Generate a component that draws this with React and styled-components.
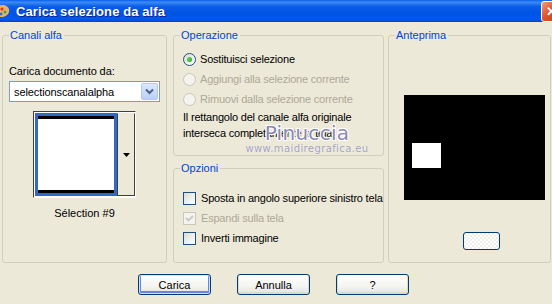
import React from "react";
import styled, { createGlobalStyle } from "styled-components";

const GlobalStyle = createGlobalStyle`
  html, body {
    margin: 0;
    padding: 0;
    background: #ece9d8;
    overflow: hidden;
  }
  body {
    font-family: "Liberation Sans", Arial, sans-serif;
    font-size: 11px;
    color: #000;
  }
`;

const Window = styled.div`
  position: relative;
  width: 552px;
  height: 304px;
  display: flex;
  flex-direction: column;
  background: #ece9d8;
  overflow: hidden;
`;

const TitleBar = styled.div`
  height: 22px;
  flex: none;
  display: flex;
  align-items: center;
  background: linear-gradient(
    #0a5fe8 0%,
    #3b8cf5 10%,
    #0a5ce6 30%,
    #0054e3 60%,
    #0058ee 88%,
    #0046c0 100%
  );
  overflow: hidden;
`;

const TitleIcon = styled.svg`
  width: 12px;
  height: 16px;
  flex: none;
  margin-left: -2px;
`;

const TitleText = styled.div`
  flex: 1;
  margin-left: 6px;
  color: #fff;
  font-family: "Liberation Sans", Arial, sans-serif;
  font-weight: bold;
  font-size: 13px;
  letter-spacing: 0.1px;
  text-shadow: 1px 1px 0 #0a1e8c;
`;

const CloseButton = styled.div`
  flex: none;
  width: 21px;
  height: 21px;
  margin-right: -10px;
  box-sizing: border-box;
  border: 1px solid #fff;
  border-radius: 3px;
  background: linear-gradient(135deg, #f0a078 0%, #e0532b 45%, #c43c13 100%);
  display: flex;
  align-items: center;
  justify-content: center;
  color: #fff;
  font-weight: bold;
  font-size: 13px;
`;

const Body = styled.div`
  display: flex;
  padding: 7px 0 0 2px;
`;

const Group = styled.fieldset`
  margin: 0 0 0 ${(p) => p.$ml || 0}px;
  padding: 0;
  box-sizing: border-box;
  width: ${(p) => p.$w}px;
  height: ${(p) => p.$h}px;
  border: 1px solid #d0d0bf;
  border-radius: 3px;
  min-inline-size: 0;
`;

const Legend = styled.legend`
  margin-left: 6px;
  padding: 0 2px 0 1px;
  line-height: 13px;
  color: #0046d5;
  font-size: 11px;
`;

const LeftInner = styled.div`
  display: flex;
  flex-direction: column;
  padding: 23px 0 0 6px;
`;

const Label = styled.div`
  line-height: 13px;
  letter-spacing: -0.1px;
`;

const Combo = styled.div`
  margin-top: 3px;
  width: 151px;
  height: 21px;
  box-sizing: border-box;
  border: 1px solid #7f9db9;
  background: #fff;
  display: flex;
  align-items: center;
  justify-content: space-between;
  padding: 1px 1px 1px 4px;
  letter-spacing: -0.1px;
`;

const ComboButton = styled.div`
  width: 17px;
  height: 17px;
  box-sizing: border-box;
  border: 1px solid #b5c8f2;
  border-radius: 2px;
  background: linear-gradient(#dde8fe, #bacef9);
  display: flex;
  align-items: center;
  justify-content: center;
`;

const Thumb = styled.div`
  margin: 9px 0 0 24px;
  width: 103px;
  height: 87px;
  box-sizing: border-box;
  display: flex;
  border-top: 1px solid #404040;
  border-left: 1px solid #404040;
  border-right: 1px solid #fff;
  border-bottom: 1px solid #fff;
  background: #fff;
  padding: 1px 0 1px 1px;
`;

const ThumbImage = styled.div`
  width: 82px;
  box-sizing: border-box;
  border: 3px solid #316ac5;
  background: #fff;
  display: flex;
  flex-direction: column;
  justify-content: space-between;
`;

const ThumbBar = styled.div`
  height: 3px;
  background: #000;
`;

const ThumbArrow = styled.div`
  flex: 1;
  background: #ece9d8;
  border: 1px solid #404040;
  border-top-color: #ece9d8;
  border-right-color: #404040;
  display: flex;
  align-items: center;
  justify-content: center;
`;

const Caption = styled.div`
  margin-top: 9px;
  margin-left: -6px;
  text-align: center;
  line-height: 13px;
`;

const MiddleColumn = styled.div`
  display: flex;
  flex-direction: column;
  gap: 6px;
  margin-left: 6px;
`;

const OpInner = styled.div`
  padding: 7px 0 0 9px;
  display: flex;
  flex-direction: column;
`;

const OptRow = styled.div`
  height: 20px;
  display: flex;
  align-items: center;
  gap: 4px;
  color: ${(p) => (p.$disabled ? "#aca899" : "#000")};
  letter-spacing: -0.2px;
`;

const Radio = styled.span`
  width: 13px;
  height: 13px;
  box-sizing: border-box;
  border-radius: 50%;
  border: 1px solid ${(p) => (p.$disabled ? "#cac8bb" : "#1c5180")};
  background: ${(p) =>
    p.$disabled ? "#f4f3ee" : "linear-gradient(135deg, #dcdcd5, #fff)"};
  display: flex;
  align-items: center;
  justify-content: center;
  flex: none;
  &::after {
    content: "";
    display: ${(p) => (p.$checked ? "block" : "none")};
    width: 5px;
    height: 5px;
    border-radius: 50%;
    background: radial-gradient(circle at 35% 35%, #5ed35e, #21a121);
  }
`;

const Checkbox = styled.span`
  width: 13px;
  height: 13px;
  box-sizing: border-box;
  border: 1px solid ${(p) => (p.$disabled ? "#cac8bb" : "#1c5180")};
  background: ${(p) =>
    p.$disabled ? "#f4f3ee" : "linear-gradient(135deg, #dcdcd5, #fff)"};
  display: flex;
  align-items: center;
  justify-content: center;
  flex: none;
  margin-right: 1px;
`;

const Note = styled.div`
  line-height: 16px;
  letter-spacing: -0.2px;
`;

const OptInner = styled.div`
  padding: 13px 0 0 9px;
  display: flex;
  flex-direction: column;
`;

const PreviewInner = styled.div`
  padding: 53px 0 0 15px;
  display: flex;
  flex-direction: column;
`;

const Preview = styled.div`
  width: 141px;
  height: 105px;
  background: #000;
  box-sizing: border-box;
  padding: 48px 0 0 8px;
`;

const PreviewMask = styled.div`
  width: 29px;
  height: 25px;
  background: #fff;
`;

const SmallButton = styled.div`
  margin: 32px 0 0 59px;
  width: 37px;
  height: 18px;
  box-sizing: border-box;
  border: 1px solid #003c74;
  border-radius: 3px;
  background: repeating-conic-gradient(#ffffff 0 25%, #eeeeea 0 50%) 0 0 / 4px 4px;
`;

const Footer = styled.div`
  display: flex;
  gap: 26px;
  padding: 11px 0 0 138px;
`;

const Button = styled.button`
  width: 73px;
  height: 21px;
  padding: 0;
  box-sizing: border-box;
  border: 1px solid #003c74;
  border-radius: 3px;
  background: linear-gradient(#ffffff 0%, #f4f4f0 60%, #e3e2da 100%);
  font-family: "Liberation Sans", Arial, sans-serif;
  font-size: 11px;
  color: #000;
  box-shadow: ${(p) =>
    p.$default
      ? "inset 0 0 0 1px #cee7ff, inset 0 -1px 0 2px #6982ee"
      : "inset 0 -1px 0 1px #dcd9cd"};
`;

const Watermark = styled.div`
  position: absolute;
  left: 244px;
  top: 122px;
  display: flex;
  flex-direction: column;
  align-items: center;
  pointer-events: none;
  width: 126px;
`;

const WatermarkName = styled.div`
  font-family: "DejaVu Sans", sans-serif;
  font-size: 20px;
  line-height: 22px;
  color: #8d88b2;
  letter-spacing: 0.3px;
  text-shadow: 0 0 1px #fff, 1px 1px 0 #fff, -1px -1px 0 #fff, 1px -1px 0 #fff,
    -1px 1px 0 #fff;
`;

const WatermarkUrl = styled.div`
  margin-top: -1px;
  font-family: "DejaVu Sans", sans-serif;
  font-size: 10px;
  line-height: 12px;
  color: #a3a1c0;
  letter-spacing: 0.4px;
  text-shadow: 0 0 1px #fff;
`;

const ChevronDown = () => (
  <svg width="9" height="7" viewBox="0 0 9 7">
    <path d="M1 1.5 L4.5 5 L8 1.5" stroke="#4d6185" strokeWidth="2" fill="none" />
  </svg>
);

const Triangle = () => (
  <svg width="7" height="4" viewBox="0 0 7 4">
    <path d="M0 0 H7 L3.5 4 Z" fill="#000" />
  </svg>
);

const Tick = () => (
  <svg width="9" height="9" viewBox="0 0 9 9">
    <path d="M1 4 L3.5 6.5 L8 2" stroke="#cac8bb" strokeWidth="1.8" fill="none" />
  </svg>
);

export default function App() {
  return (
    <Window>
      <GlobalStyle />
      <TitleBar>
        <TitleIcon viewBox="0 0 12 16">
          <path d="M0 3 Q8 0 11 6 Q12 12 5 14 L0 14 Z" fill="#e7b36a" />
          <circle cx="4" cy="6" r="1.6" fill="#d33" />
          <circle cx="7" cy="9" r="1.5" fill="#3a3" />
          <circle cx="3" cy="11" r="1.4" fill="#36c" />
        </TitleIcon>
        <TitleText>Carica selezione da alfa</TitleText>
        <CloseButton>✕</CloseButton>
      </TitleBar>
      <Body>
        <Group $w={165} $h={234}>
          <Legend>Canali alfa</Legend>
          <LeftInner>
            <Label>Carica documento da:</Label>
            <Combo>
              <span>selectionscanalalpha</span>
              <ComboButton>
                <ChevronDown />
              </ComboButton>
            </Combo>
            <Thumb>
              <ThumbImage>
                <ThumbBar />
                <ThumbBar />
              </ThumbImage>
              <ThumbArrow>
                <Triangle />
              </ThumbArrow>
            </Thumb>
            <Caption>Sélection #9</Caption>
          </LeftInner>
        </Group>
        <MiddleColumn>
          <Group $w={211} $h={127}>
            <Legend>Operazione</Legend>
            <OpInner>
              <OptRow>
                <Radio $checked />
                Sostituisci selezione
              </OptRow>
              <OptRow $disabled>
                <Radio $disabled />
                Aggiungi alla selezione corrente
              </OptRow>
              <OptRow $disabled>
                <Radio $disabled />
                Rimuovi dalla selezione corrente
              </OptRow>
              <Note>
                Il rettangolo del canale alfa originale
                <br />
                interseca completamente la tela
              </Note>
            </OpInner>
          </Group>
          <Group $w={211} $h={101}>
            <Legend>Opzioni</Legend>
            <OptInner>
              <OptRow>
                <Checkbox />
                Sposta in angolo superiore sinistro tela
              </OptRow>
              <OptRow $disabled>
                <Checkbox $disabled>
                  <Tick />
                </Checkbox>
                Espandi sulla tela
              </OptRow>
              <OptRow>
                <Checkbox />
                Inverti immagine
              </OptRow>
            </OptInner>
          </Group>
        </MiddleColumn>
        <Group $w={163} $h={234} $ml={4}>
          <Legend>Anteprima</Legend>
          <PreviewInner>
            <Preview>
              <PreviewMask />
            </Preview>
            <SmallButton />
          </PreviewInner>
        </Group>
      </Body>
      <Footer>
        <Button $default>Carica</Button>
        <Button>Annulla</Button>
        <Button>?</Button>
      </Footer>
      <Watermark>
        <WatermarkName>Pinuccia</WatermarkName>
        <WatermarkUrl>www.maidiregrafica.eu</WatermarkUrl>
      </Watermark>
    </Window>
  );
}
